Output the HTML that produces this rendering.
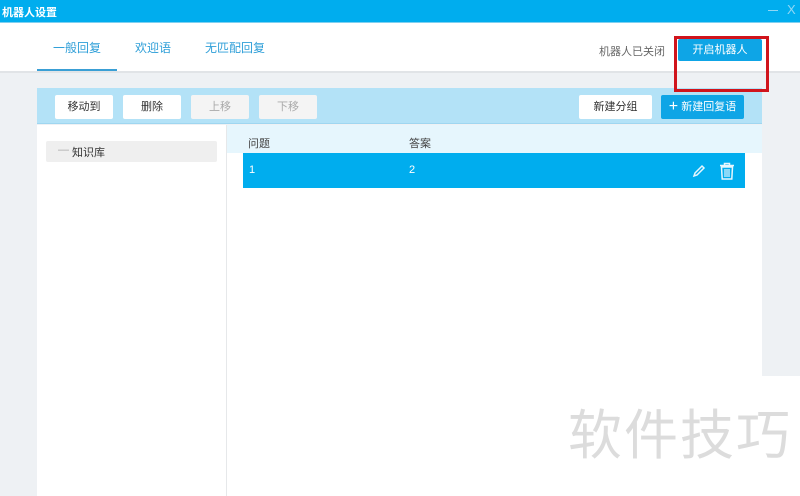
<!DOCTYPE html>
<html><head><meta charset="utf-8"><style>
*{margin:0;padding:0;box-sizing:border-box}
body{width:800px;height:496px;overflow:hidden;position:relative;background:#fff;font-family:"Liberation Sans","Noto Sans CJK SC",sans-serif;font-size:11px;color:#333}
.a{position:absolute}
.btn{position:absolute;background:#fff;text-align:center;line-height:24px;font-size:11px;color:#333;border-radius:2px}
.dis{background:#f4f4f4;color:#aaa}
.blue{background:#0ea5e6;color:#fff}
</style></head><body>
<div class="a" style="left:0;top:0;width:800px;height:22px;background:#00adee"></div>
<div class="a" style="left:2px;top:4px;color:#fff;font-size:11px;font-weight:bold">机器人设置</div>
<div class="a" style="left:768px;top:10px;width:10px;height:1px;background:#8fd7f5"></div>
<div class="a" style="left:787px;top:2px;color:#8fd7f5;font-size:13px">X</div>
<div class="a" style="left:0;top:22px;width:800px;height:1px;background:#7fd0f0"></div>
<div class="a" style="left:0;top:23px;width:800px;height:49px;background:#fff"></div>
<div class="a" style="left:53px;top:39px;color:#2f9fd8;font-size:12px">一般回复</div>
<div class="a" style="left:135px;top:39px;color:#2f9fd8;font-size:12px">欢迎语</div>
<div class="a" style="left:205px;top:39px;color:#2f9fd8;font-size:12px">无匹配回复</div>
<div class="a" style="left:37px;top:69px;width:80px;height:2px;background:#3a9fd5"></div>
<div class="a" style="left:0;top:71px;width:800px;height:2px;background:#e1e4e7"></div>
<div class="a" style="left:599px;top:43px;color:#666;font-size:11px">机器人已关闭</div>
<div class="btn blue" style="left:678px;top:39px;width:84px;height:22px;line-height:22px">开启机器人</div>
<div class="a" style="left:0;top:73px;width:800px;height:303px;background:#eef1f4"></div>
<div class="a" style="left:0;top:376px;width:37px;height:120px;background:#eef1f4"></div>
<div class="a" style="left:37px;top:88px;width:725px;height:36px;background:#b3e2f7;border-bottom:1px solid #9fd6f0"></div>
<div class="btn" style="left:55px;top:95px;width:58px">移动到</div>
<div class="btn" style="left:123px;top:95px;width:58px">删除</div>
<div class="btn dis" style="left:191px;top:95px;width:58px">上移</div>
<div class="btn dis" style="left:259px;top:95px;width:58px">下移</div>
<div class="btn" style="left:579px;top:95px;width:73px">新建分组</div>
<div class="btn blue" style="left:661px;top:95px;width:83px"><span style="font-size:16px;vertical-align:-1px">+</span> 新建回复语</div>
<div class="a" style="left:37px;top:125px;width:189px;height:371px;background:#fff"></div>
<div class="a" style="left:226px;top:125px;width:1px;height:371px;background:#e6e8ea"></div>
<div class="a" style="left:46px;top:141px;width:171px;height:21px;background:#efefef;border-radius:2px"></div>
<div class="a" style="left:58px;top:144px;color:#aaa">—</div>
<div class="a" style="left:72px;top:144px;color:#333">知识库</div>
<div class="a" style="left:227px;top:125px;width:535px;height:371px;background:#fff"></div>
<div class="a" style="left:227px;top:125px;width:535px;height:28px;background:#e6f6fd"></div>
<div class="a" style="left:248px;top:135px;color:#444">问题</div>
<div class="a" style="left:409px;top:135px;color:#444">答案</div>
<div class="a" style="left:243px;top:153px;width:502px;height:35px;background:#00adee"></div>
<div class="a" style="left:249px;top:164px;color:#fff">1</div>
<div class="a" style="left:409px;top:164px;color:#fff">2</div>
<svg class="a" style="left:692px;top:164px" width="14" height="14" viewBox="0 0 14 14"><path d="M2 12 L3 9 L10 2 L12 4 L5 11 Z" fill="none" stroke="#e6f6fd" stroke-width="1.5"/></svg>
<svg class="a" style="left:719px;top:162px" width="16" height="18" viewBox="0 0 16 18"><path d="M1 3.5H15M5.5 3.5V1.5H10.5V3.5M2.5 5H13.5L12.8 17H3.2Z" fill="none" stroke="#e6f6fd" stroke-width="1.5"/><path d="M6 7V15M8 7V15M10 7V15" stroke="#e6f6fd" stroke-width="1.2"/></svg>
<div class="a" style="left:762px;top:376px;width:38px;height:120px;background:#fff"></div>
<div class="a" style="left:568px;top:398px;font-size:54px;color:#dcdcdc;letter-spacing:2px;line-height:66px;font-family:'Noto Sans CJK SC',sans-serif">软件技巧</div>
<div class="a" style="left:674px;top:36px;width:95px;height:56px;border:3px solid #d0141c"></div>
</body></html>
